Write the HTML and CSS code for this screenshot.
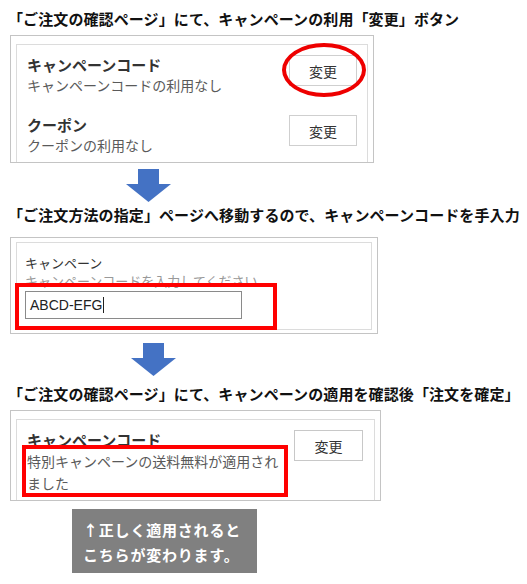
FILE: index.html
```html
<!DOCTYPE html>
<html lang="ja">
<head>
  <meta charset="UTF-8" />
  <title>キャンペーンコードの使い方</title>
  <link rel="stylesheet" href="styles.css">
</head>
<body>

<!-- 手順1 -->
<h2 class="step step-1">「ご注文の確認ページ」にて、キャンペーンの利用「変更」ボタン</h2>
<div class="shot shot-1">
  <div class="card">
    <div class="row">
      <div class="info">
        <div class="info-title">キャンペーンコード</div>
        <div class="info-text">キャンペーンコードの利用なし</div>
      </div>
      <button class="change-btn">変更</button>
    </div>
    <div class="row">
      <div class="info">
        <div class="info-title">クーポン</div>
        <div class="info-text">クーポンの利用なし</div>
      </div>
      <button class="change-btn">変更</button>
    </div>
  </div>
  <div class="mark-ellipse"></div>
</div>

<svg class="arrow arrow-1" width="45" height="33" viewBox="0 0 45 33">
  <polygon points="12,0 33,0 33,15 45,15 22.5,33 0,15 12,15" fill="#4472c4" />
</svg>

<!-- 手順2 -->
<h2 class="step step-2">「ご注文方法の指定」ページへ移動するので、キャンペーンコードを手入力</h2>
<div class="shot shot-2">
  <div class="card card-form">
    <div class="form-label">キャンペーン</div>
    <div class="form-hint">キャンペーンコードを入力してください</div>
    <div class="code-input"><span class="code-value">ABCD-EFG</span></div>
  </div>
  <div class="mark-box mark-box-2"></div>
</div>

<svg class="arrow arrow-2" width="45" height="33" viewBox="0 0 45 33">
  <polygon points="12,0 33,0 33,15 45,15 22.5,33 0,15 12,15" fill="#4472c4" />
</svg>

<!-- 手順3 -->
<h2 class="step step-3">「ご注文の確認ページ」にて、キャンペーンの適用を確認後「注文を確定」</h2>
<div class="shot shot-3">
  <div class="card card-result">
    <div class="row">
      <div class="info info-wrap">
        <div class="info-title">キャンペーンコード</div>
        <div class="info-text">特別キャンペーンの送料無料が適用されました</div>
      </div>
      <button class="change-btn">変更</button>
    </div>
  </div>
  <div class="mark-box mark-box-3"></div>
</div>

<div class="note">↑正しく適用されると<br>こちらが変わります。</div>

</body>
</html>
```

FILE: styles.css
```css
* { box-sizing: border-box; }
body {
  font-family: "Noto Sans CJK JP", sans-serif;
  background: #fff;
  color: #333;
  margin: 0;
  padding: 0 8px;
  width: 527px;
}
.step {
  font-size: 15px;
  line-height: 22px;
  font-weight: bold;
  color: #111;
  margin: 0;
  white-space: nowrap;
  letter-spacing: 0.1px;
}
.step-1 { margin-top: 8px; }
.step-2 { margin-top: 2px; }
.step-3 { margin-top: 7px; }

/* スクリーンショット枠 */
.shot {
  position: relative;
  margin-left: 2px;
  border: 1px solid #c4c4c4;
  padding: 0 5px;
  background: #fff;
}
.shot-1 { width: 364px; height: 128px; margin-top: 5px; }
.shot-2 { width: 368px; height: 97px; margin-top: 11px; }
.shot-3 { width: 371px; height: 91px; margin-top: 5px; }

.card {
  height: 100%;
  margin-top: 8px;
  border: 1px solid #dcdcdc;
  border-bottom: none;
  padding: 9px 10px 0 10px;
}
.shot-1 .card { height: 118px; }
.shot-3 .card { height: 81px; }

.row {
  display: flex;
  justify-content: space-between;
  align-items: flex-start;
  margin-bottom: 18px;
}
.info-title {
  font-size: 15px;
  line-height: 21px;
  font-weight: bold;
  color: #333;
}
.info-text {
  font-size: 14px;
  line-height: 21px;
  color: #5a5a5a;
}
.change-btn {
  font-family: "Noto Sans CJK JP", sans-serif;
  font-size: 14px;
  color: #333;
  background: #fff;
  border: 1px solid #cfcfcf;
  width: 68px;
  height: 31px;
  margin-top: 1px;
  padding: 0;
}

/* 入力フォーム */
.shot-2 .card {
  margin-top: 4px;
  height: 88px;
  border-bottom: 1px solid #dcdcdc;
  padding: 11px 10px 0 8px;
}
.form-label {
  font-size: 13px;
  line-height: 18px;
  color: #333;
}
.form-hint {
  font-size: 13px;
  line-height: 18px;
  color: #999;
}
.code-input {
  width: 217px;
  height: 28px;
  margin-top: 1px;
  border: 1px solid #8a8a8a;
  padding: 0 4px;
  font-family: "Liberation Sans", Arial, sans-serif;
  font-size: 14px;
  line-height: 26px;
  color: #222;
}
.code-value {
  border-right: 1px solid #222;
  padding-right: 1px;
}

/* 結果 */
.shot-3 .card { padding: 9px 11px 0 10px; }
.info-wrap { width: 262px; }
.info-wrap .info-text { line-height: 22px; }
.shot-3 .change-btn { width: 69px; border-color: #c8c8c8; }

/* 赤い印 */
.mark-ellipse {
  position: absolute;
  left: 271px;
  top: 7px;
  width: 84px;
  height: 54px;
  border: 4px solid #ee0000;
  border-radius: 50%;
}
.mark-box {
  position: absolute;
  border: 4px solid #ff0000;
}
.mark-box-2 { left: 4px; top: 45px; width: 262px; height: 47px; }
.mark-box-3 { left: 11px; top: 34px; width: 266px; height: 52px; }

.arrow { display: block; }
.arrow-1 { margin: 6px 0 0 118px; }
.arrow-2 { margin: 9px 0 0 123px; }

.note {
  margin: 8px 0 0 64px;
  width: 185px;
  height: 64px;
  background: #808080;
  color: #fff;
  font-size: 15px;
  font-weight: bold;
  line-height: 25px;
  letter-spacing: 0.8px;
  padding: 8px 0 0 11px;
}
```
